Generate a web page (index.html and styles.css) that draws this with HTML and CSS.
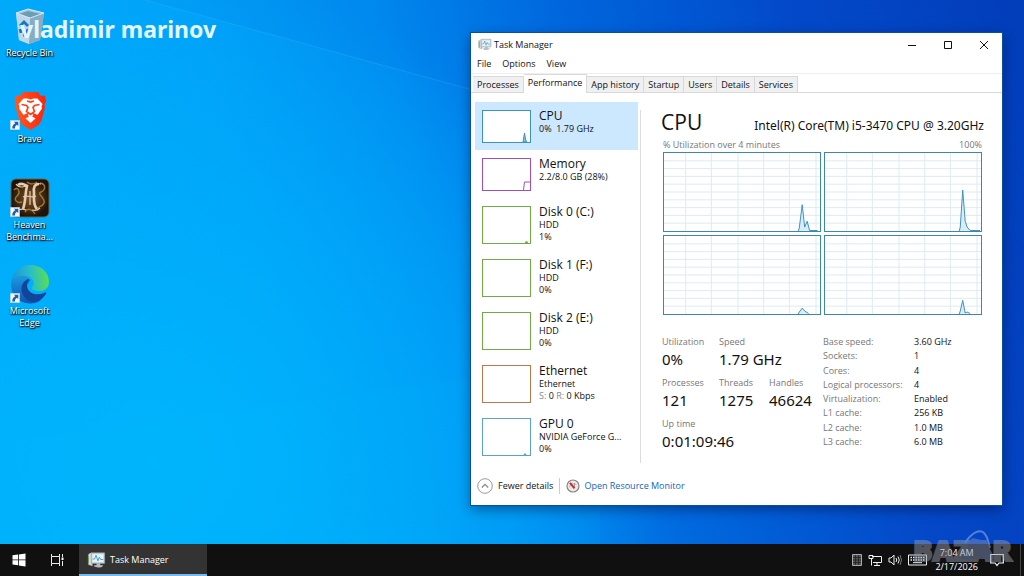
FILE: index.html
```html
<!DOCTYPE html>
<html lang="en">
<head>
<meta charset="utf-8">
<title>Desktop</title>
<link rel="stylesheet" href="styles.css">
</head>
<body>
<svg class="defs" aria-hidden="true">
  <defs>
    <symbol id="shortcut" viewBox="0 0 10 10">
      <path fill="#f4f6f8" stroke="#b9c3cc" stroke-width=".6" d="M.3.3h9.4v9.4H.3z"/>
      <path fill="#1d5fae" d="M4 1.800h4.300v4.300L6.900 4.800C5.400 5.700 4.900 6.700 5 8.400H2.300C2.200 6 3 4.400 5.300 3.200z"/>
    </symbol>
    <symbol id="taskmgr" viewBox="0 0 20 18">
      <path fill="#8f9a9f" d="M1 3h5v12.500L1 14z"/>
      <path fill="#d7dcdf" d="M2 2.500 5 1v14l-3-1.500z"/>
      <path fill="#6a9c4f" d="M1 5h1v8H1z"/>
      <path fill="#d3d9dc" stroke="#99a3a8" stroke-width=".8" d="M4.500 1.500h14v11h-14z"/>
      <path fill="#e6f3fa" d="M6 3h11v8H6z"/>
      <path fill="none" stroke="#3f9fd3" stroke-width="1" d="M6 8h2l1.500-4 2 6 1.500-4 1.500 2.500H17"/>
      <path fill="#b5bdc1" d="M10 12.500h4v2h3c0 3-8 3-9.500 1.200V14.500H10z"/>
    </symbol>
    <symbol id="grid" viewBox="0 0 158 80" preserveAspectRatio="none">
      <path fill="none" stroke="#dcebf2" d="M0 8h158M0 16h158M0 24h158M0 32h158M0 40h158M0 48h158M0 56h158M0 64h158M0 72h158M22 0v80M48 0v80M75 0v80M101 0v80M127 0v80M154 0v80"/>
    </symbol>
  </defs>
</svg>

<div class="screen">
  <main class="desktop">
    <svg class="rays" viewBox="0 0 1024 544" preserveAspectRatio="none" aria-hidden="true">
      <path fill="#004fd0" fill-opacity=".07" d="M145 0 1024 242V0z"/>
      <path fill="#00c4ff" fill-opacity=".08" d="M0 442 600 360V544H0z"/>
      <path fill="none" stroke="#5cc4ff" stroke-opacity=".22" d="M145 0 600 125"/>
    </svg>

    <nav class="shortcuts" aria-label="Desktop icons">
      <a class="shortcut" href="#bin">
        <svg class="shortcut-icon" viewBox="0 0 40 40">
          <path fill="#a9c9dc" d="M6 7 18 3l16 4-4 27-11 4-10-4z"/>
          <path fill="#6d9cb6" d="M9 8 18 5l13 3-11 4z"/>
          <path fill="#86adc3" d="M20 12 34 7l-4 27-11 4z"/>
          <path fill="#bdd8e7" d="M6 7l14 5-1 26-10-4z"/>
          <path fill="none" stroke="#d5e7f1" stroke-width="1" d="M6 7 18 3l16 4-14 5z"/>
          <path fill="none" stroke="#1677c8" stroke-width="2.800" d="M10 20l4-4 4 4M18 23l-2 6h-3M11 27l-1-4"/>
        </svg>
        <span>Recycle Bin</span>
      </a>
      <a class="shortcut" href="#brave">
        <svg class="shortcut-icon" viewBox="0 0 40 40">
          <defs><linearGradient id="brave-fill"><stop stop-color="#ff5a1f"/><stop offset="1" stop-color="#fa2410"/></linearGradient></defs>
          <path fill="url(#brave-fill)" d="M13 0h15l3 4 4-.5 1 6-1.500 3 .5 3-3.500 13-3 4.500L20.500 38l-8-5-3-4.500L5.500 15.500l.5-3-1.500-3 1-6L10 4z"/>
          <path fill="#fff" d="M13.500 6.500h4l3 1 3-1h4l5 5.500-1 2.500.5 2-4.500 6.500-4-2-1 1 .5 2-2.500 1-2.500-1 .5-2-1-1-4 2-4.500-6.500.5-2-1-2.500z"/>
          <path fill="#fff" d="M15.500 26.500 20.500 23.500l5 3-5 4.500z"/>
          <path fill="none" stroke="#fc4018" stroke-width="1.700" d="M11.500 12.500l5 1 1.500 2-1.500 4 4 3 4-3-1.500-4 1.500-2 5-1M17 9l3.500 1 3.500-1"/>
          <use href="#shortcut" x="0" y="28" width="10" height="10"/>
        </svg>
        <span>Brave</span>
      </a>
      <a class="shortcut" href="#heaven">
        <svg class="shortcut-icon" viewBox="0 0 40 40">
          <defs><radialGradient id="heaven-fill"><stop stop-color="#7b5426"/><stop offset=".6" stop-color="#4a2f14"/><stop offset="1" stop-color="#1e130a"/></radialGradient></defs>
          <rect x="1" y="1" width="38" height="38" rx="5" fill="url(#heaven-fill)" stroke="#6c604c"/>
          <path fill="none" stroke="#9e7437" stroke-width="1.500" d="M4 12c4-5 7 3 3 6s0 8 5 6M30 5c6 1 6 7 1 9s5 6 3 11-6 2-6 6M17 4c3 3 8 2 10 0M15 34c3-5 8-2 10 2"/>
          <path fill="none" stroke="#e6cdb2" stroke-width="2.600" d="M8 7c4-3 7 0 9 1-2 7-1 15-4 23M29 6c-4 0-6 3-5 9 0 6-1 12 3 16"/>
          <path fill="none" stroke="#e6cdb2" stroke-width="1.200" d="M6 6c2 3 5 4 10 2M13 19c5-3 8 2 13-1M9 32c3-2 4-1 7 0M22 32c3 1 5 1 8-2M24 8c3-4 5-2 7-2M20 13v14"/>
          <use href="#shortcut" x="0" y="29" width="10" height="10"/>
        </svg>
        <span>Heaven Benchma...</span>
      </a>
      <a class="shortcut" href="#edge">
        <svg class="shortcut-icon" viewBox="0 0 40 40">
          <defs>
            <linearGradient id="edge-top" x1="0" x2="1" y1=".5" y2=".4"><stop stop-color="#1694dc"/><stop offset=".5" stop-color="#28bccb"/><stop offset="1" stop-color="#5be04e"/></linearGradient>
            <linearGradient id="edge-left" x1="0" x2="0" y1="0" y2="1"><stop stop-color="#1b9de2"/><stop offset="1" stop-color="#0f55b4"/></linearGradient>
          </defs>
          <path fill="url(#edge-left)" d="M1 20c1-9 10-12 16-8 4 3 3 6 1 8-4 7 2 17 14 15-4 4-9 4.500-12 4.500C8 39 1 31 1 20z"/>
          <path fill="#12449a" d="M18 15c-7 3-9 12-3 19 5 6 15 5 21-4 1-2-1-2-2-1-7 3-16 1-17-7-.2-3 1-4 3-6z"/>
          <path fill="url(#edge-top)" d="M1 19C2 8 10 1 20 1c12 0 19 8 19 17 0 6-5 10-11 9-4 0-7-2-6-4 3-3 2-8-3-10C11 10 3 12 1 19z"/>
          <use href="#shortcut" x="0" y="29" width="10" height="10"/>
        </svg>
        <span>Microsoft Edge</span>
      </a>
    </nav>

    <p class="owner-mark">vladimir marinov</p>

    <section class="window" aria-label="Task Manager">
      <header class="titlebar">
        <svg class="title-icon"><use href="#taskmgr"/></svg>
        <h1 class="title">Task Manager</h1>
        <button class="caption-button" aria-label="Minimize"><svg viewBox="0 0 10 10"><path d="M1 5.500h8"/></svg></button>
        <button class="caption-button" aria-label="Maximize"><svg viewBox="0 0 10 10"><path d="M1.500 1.500h7v7h-7z"/></svg></button>
        <button class="caption-button" aria-label="Close"><svg viewBox="0 0 10 10"><path d="M1 1l8 8M9 1 1 9"/></svg></button>
      </header>
      <div class="menubar">
        <button>File</button><button>Options</button><button>View</button>
      </div>
      <div class="tabs" role="tablist">
        <button class="tab" role="tab">Processes</button>
        <button class="tab tab-active" role="tab" aria-selected="true">Performance</button>
        <button class="tab" role="tab">App history</button>
        <button class="tab" role="tab">Startup</button>
        <button class="tab" role="tab">Users</button>
        <button class="tab" role="tab">Details</button>
        <button class="tab" role="tab">Services</button>
      </div>

      <div class="content">
        <div class="resources">
          <button class="resource resource-short resource-active">
            <svg class="thumb thumb-cpu" viewBox="0 0 47 31"><path d="M40 31l1.500-9 1 6 1 3z"/></svg>
            <span class="resource-text"><span class="resource-name">CPU</span><span>0%&nbsp; 1.79 GHz</span></span>
          </button>
          <button class="resource resource-short">
            <svg class="thumb thumb-memory" viewBox="0 0 47 31"><path d="M40.500 31l1-8H47"/></svg>
            <span class="resource-text"><span class="resource-name">Memory</span><span>2.2/8.0 GB (28%)</span></span>
          </button>
          <button class="resource">
            <svg class="thumb thumb-disk" viewBox="0 0 47 36"><path d="M42 35.500l1.500-1 1.500 1z"/></svg>
            <span class="resource-text"><span class="resource-name">Disk 0 (C:)</span><span>HDD</span><span>1%</span></span>
          </button>
          <button class="resource">
            <svg class="thumb thumb-disk" viewBox="0 0 47 36"></svg>
            <span class="resource-text"><span class="resource-name">Disk 1 (F:)</span><span>HDD</span><span>0%</span></span>
          </button>
          <button class="resource">
            <svg class="thumb thumb-disk" viewBox="0 0 47 36"></svg>
            <span class="resource-text"><span class="resource-name">Disk 2 (E:)</span><span>HDD</span><span>0%</span></span>
          </button>
          <button class="resource">
            <svg class="thumb thumb-ethernet" viewBox="0 0 47 36"></svg>
            <span class="resource-text"><span class="resource-name">Ethernet</span><span>Ethernet</span><span><i>S:</i> 0 <i>R:</i> 0 Kbps</span></span>
          </button>
          <button class="resource">
            <svg class="thumb thumb-gpu" viewBox="0 0 47 36"><path d="M41 35.500l1-1 1 1z"/></svg>
            <span class="resource-text"><span class="resource-name">GPU 0</span><span>NVIDIA GeForce G...</span><span>0%</span></span>
          </button>
        </div>

        <div class="details">
          <div class="details-head">
            <h2>CPU</h2>
            <p>Intel(R) Core(TM) i5-3470 CPU @ 3.20GHz</p>
          </div>
          <div class="chart-area">
            <div class="chart-caption"><span>% Utilization over 4 minutes</span><span>100%</span></div>
            <div class="charts">
              <svg viewBox="0 0 158 80" preserveAspectRatio="none"><use href="#grid"/><path class="trace" d="M136 80l1-3 3-24 2.500 23L145 70l2.500 9.500h8"/></svg>
              <svg viewBox="0 0 158 80" preserveAspectRatio="none"><use href="#grid"/><path class="trace" d="M136 80l1-4 2.500-38L142 70l2 6 3 3.500h10"/></svg>
              <svg viewBox="0 0 158 80" preserveAspectRatio="none"><use href="#grid"/><path class="trace" d="M136 80l1-2 3-4 2.500 3 4 2.500"/></svg>
              <svg viewBox="0 0 158 80" preserveAspectRatio="none"><use href="#grid"/><path class="trace" d="M136 80l1-3 2.500-11L142 79l2-1 3 1.500"/></svg>
            </div>
          </div>
          <div class="stats">
            <div class="live">
              <div class="stat"><span>Utilization</span><b>0%</b></div>
              <div class="stat stat-wide"><span>Speed</span><b>1.79 GHz</b></div>
              <div class="stat"><span>Processes</span><b>121</b></div>
              <div class="stat"><span>Threads</span><b>1275</b></div>
              <div class="stat"><span>Handles</span><b>46624</b></div>
              <div class="stat stat-full"><span>Up time</span><b>0:01:09:46</b></div>
            </div>
            <dl class="specs">
              <dt>Base speed:</dt><dd>3.60 GHz</dd>
              <dt>Sockets:</dt><dd>1</dd>
              <dt>Cores:</dt><dd>4</dd>
              <dt>Logical processors:</dt><dd>4</dd>
              <dt>Virtualization:</dt><dd>Enabled</dd>
              <dt>L1 cache:</dt><dd>256 KB</dd>
              <dt>L2 cache:</dt><dd>1.0 MB</dd>
              <dt>L3 cache:</dt><dd>6.0 MB</dd>
            </dl>
          </div>
        </div>
      </div>

      <footer class="window-foot">
        <button class="fewer">
          <svg viewBox="0 0 16 16"><circle cx="8" cy="8" r="7.300" fill="#fff" stroke="#9a9a9a"/><path fill="none" stroke="#8a8a8a" stroke-width="1.300" d="M4.800 9.500 8 6.300l3.200 3.200"/></svg>
          Fewer details
        </button>
        <a class="monitor" href="#monitor">
          <svg viewBox="0 0 14 14"><circle cx="7" cy="7" r="6" fill="#e9ebeb" stroke="#8a8583" stroke-width="1.200"/><path fill="none" stroke="#bbb" d="M3.500 8.500a4 4 0 0 1 7-2.500"/><path stroke="#d0281f" stroke-width="2" d="M4 3.800l4.500 5.500"/><path stroke="#888" stroke-width=".8" d="M8.500 4v4"/></svg>
          Open Resource Monitor
        </a>
      </footer>
    </section>
  </main>

  <footer class="taskbar">
    <button class="bar-button" aria-label="Start"><svg viewBox="0 0 14 14" width="14" height="14"><path fill="#fff" d="M.5 2.300 6 1.500v5H.5zM6.800 1.400 13.500.5v6H6.800zM.5 7.300H6v5l-5.500-.8zM6.800 7.300h6.700v6.200l-6.700-1z"/></svg></button>
    <button class="bar-button" aria-label="Task View"><svg viewBox="0 0 14 14" width="14" height="14"><path fill="none" stroke="#eee" d="M1.500 1v2.500h8V1M1.500 13v-2.500h8V13M1.500 3.500v7M9.500 3.500v7M12.500 1v3M12.500 8v5"/><path fill="#fff" d="M11.500 4.500h2v2.500h-2z"/></svg></button>
    <button class="task"><svg class="task-icon"><use href="#taskmgr"/></svg>Task Manager</button>
    <div class="tray">
      <svg width="10" height="12" viewBox="0 0 10 12"><path fill="#555" stroke="#aaa" d="M.5.5h9v11h-9z"/><path stroke="#222" stroke-width=".8" d="M3.500 1v10M6.500 1v10M1 3.500h8M1 6h8M1 8.500h8"/></svg>
      <svg width="14" height="12" viewBox="0 0 14 12"><path fill="none" stroke="#f0f0f0" d="M4 2.500h9.500v6H5M3.500 5v6.500M6 11.500h6M9 8.500v3M1 1.500h4v3H1z"/></svg>
      <svg width="14" height="12" viewBox="0 0 14 12"><path fill="none" stroke="#eee" d="M1 4h2l3-3v10L3 8H1zM8 4q1.500 2 0 4M10 2.500q2.500 3.500 0 7"/><path fill="none" stroke="#777" d="M12 1q3 5 0 10"/></svg>
      <svg width="19" height="12" viewBox="0 0 19 12"><path fill="none" stroke="#eee" d="M.5 1h18v10H.5z"/><path stroke="#eee" stroke-width="1.300" stroke-dasharray="1.500 1" d="M2.500 3.500h14M2.500 6h14"/><path stroke="#eee" d="M5 8.700h9"/></svg>
      <time class="clock" datetime="2026-02-17T07:04">7:04 AM<br>2/17/2026</time>
      <svg width="14" height="14" viewBox="0 0 14 14"><path fill="none" stroke="#f4f4f4" stroke-width="1.200" d="M.7 1.500h12.600v8.500H9L7 12.500 5 10H.7z"/></svg>
    </div>
  </footer>

  <div class="bazar" aria-hidden="true">
    <span>BAZAR</span>
    <svg viewBox="0 0 40 34"><path fill="#7f8fb8" d="M1 30 12 9l14 3 9 18z"/><path fill="none" stroke="#a9baea" stroke-width="2" d="M5 14C12 3 20 0 24 4s4 8 6 15"/></svg>
  </div>
</div>
</body>
</html>
```
FILE: styles.css
```css
* { box-sizing: border-box; }

body {
  margin: 0;
  font: 9px/12px "Open Sans", "Noto Sans", sans-serif;
  color: #111;
}

button {
  margin: 0;
  padding: 0;
  border: 0;
  background: none;
  font: inherit;
  color: inherit;
  text-align: left;
}

a { color: inherit; text-decoration: none; }
h1, h2, p, dl, dd { margin: 0; font-weight: 400; }
.defs { position: absolute; width: 0; height: 0; }

.screen {
  position: relative;
  display: flex;
  flex-direction: column;
  min-height: 100vh;
}

.desktop {
  position: relative;
  flex: 1;
  overflow: hidden;
  background:
    radial-gradient(ellipse 50% 90% at 15% 85%, rgba(0, 182, 252, .9) 0%, rgba(0, 174, 252, .6) 55%, rgba(0, 160, 250, 0) 100%),
    linear-gradient(76deg, #00aefa 0%, #00a2f8 28%, #008cf0 44%, #0068de 60%, #0448c8 80%, #033cb8 100%);
}

.rays { position: absolute; inset: 0; width: 100%; height: 100%; }

.shortcuts {
  position: relative;
  display: grid;
  grid-auto-rows: 86px;
  width: 59px;
  padding-top: 6px;
}

.shortcut {
  display: flex;
  flex-direction: column;
  align-items: center;
  gap: 1px;
  color: #fff;
  text-align: center;
  text-shadow: 0 1px 2px #000, 1px 1px 1px #000;
}

.shortcut-icon { width: 40px; height: 40px; }

.owner-mark {
  position: absolute;
  top: 14px;
  left: 20px;
  font: 700 23px/30px "Noto Sans", sans-serif;
  color: #e4f6ff;
}

.window {
  position: absolute;
  top: 33px;
  left: 46%;
  right: 22px;
  background: #fff;
  box-shadow: 0 0 0 1px #0a4f98, 0 4px 12px rgba(0, 0, 40, .45);
}

.titlebar { display: flex; align-items: center; height: 23px; padding-left: 7px; }
.title-icon { width: 14px; height: 13px; }
.title { flex: 1; margin-left: 2px; font-size: 9px; }
.caption-button { display: flex; justify-content: center; width: 36px; }
.caption-button svg { width: 10px; height: 10px; fill: none; stroke: #111; }

.menubar { display: flex; align-items: flex-start; gap: 11px; height: 17px; padding: 2px 6px 0; }

.tabs {
  display: flex;
  align-items: flex-end;
  height: 20px;
  padding-left: 2px;
  border-top: 1px solid #efefef;
  border-bottom: 1px solid #d9d9d9;
}

.tab {
  height: 16px;
  padding: 0 4px;
  border: 1px solid #d9d9d9;
  border-width: 1px 1px 0 0;
  background: #f0f0f0;
}

.tab-active { height: 19px; margin-bottom: -1px; padding-bottom: 3px; background: #fff; }

.content { display: flex; padding: 9px 18px 0 4px; }

.resources { width: 163px; }

.resource {
  display: flex;
  gap: 8px;
  width: 100%;
  height: 53px;
  padding: 8px 0 0 7px;
}

.resource-short { height: 48px; }
.resource-active { background: #cce8ff; }

.thumb { width: 49px; height: 38px; border: 1px solid; background: #fff; fill: none; stroke: currentColor; }
.resource-short .thumb { height: 33px; }
.thumb-cpu { color: #3c91bd; fill: #8cc3df; }
.thumb-memory { color: #a24fb5; }
.thumb-disk { color: #6fac46; }
.thumb-ethernet { color: #bd7748; }
.thumb-gpu { color: #5ba3cc; }

.resource-text { display: flex; flex-direction: column; margin-top: -1px; white-space: nowrap; }
.resource-name { font-size: 12px; line-height: 14px; }
.resource i { font-style: normal; color: #888; }

.details {
  flex: 1;
  margin: 8px 0 0 2px;
  padding-left: 20px;
  border-left: 1px solid #dcdcdc;
}

.details-head { display: flex; justify-content: space-between; align-items: baseline; height: 28px; line-height: 24px; }
.details-head h2 { font-size: 21px; }
.details-head p { font: 12px/24px "Noto Sans", sans-serif; }
.chart-area { padding: 0 2px; }
.chart-caption { display: flex; justify-content: space-between; height: 14px; line-height: 14px; color: #777; }

.charts { display: grid; grid-template-columns: 1fr 1fr; gap: 3px; }
.charts svg { width: 100%; height: 80px; border: 1px solid #3d86ae; }
.trace { fill: #d9edf7; stroke: #3d8fc0; }

.stats { display: flex; padding: 21px 0 0 1px; }
.live { display: grid; grid-template-columns: 57px 50px 54px; row-gap: 7px; }
.stat { display: flex; flex-direction: column; white-space: nowrap; }
.stat span, .specs dt { color: #777; }
.stat b { font: 15px/22px "Noto Sans", sans-serif; }
.stat-wide { grid-column: span 2; }
.stat-full { grid-column: span 3; }
.specs { display: grid; grid-template-columns: 91px 1fr; align-content: space-between; padding-bottom: 4px; white-space: nowrap; }

.window-foot { display: flex; align-items: center; padding: 15px 6px 11px; }
.fewer, .monitor { display: flex; align-items: center; gap: 5px; }
.fewer { padding-right: 6px; border-right: 1px solid #ccc; }
.fewer svg { width: 16px; height: 16px; }
.monitor { gap: 4px; padding-left: 6px; color: #1464c0; }
.monitor svg { width: 14px; height: 14px; }

.taskbar { display: flex; height: 32px; background: #101010; color: #fff; }
.bar-button { display: grid; place-items: center; width: 38px; }
.task {
  display: flex;
  align-items: center;
  gap: 4px;
  width: 128px;
  margin-left: 3px;
  padding: 2px 0 0 8px;
  border-bottom: 2px solid #76b9ed;
  background: #333;
}
.task-icon { width: 19px; height: 18px; }
.tray { display: flex; align-items: center; gap: 6px; margin-left: auto; margin-right: 3px; padding-right: 16px; border-right: 1px solid #444; }
.clock { margin: 0 6px 0 2px; line-height: 14px; text-align: center; }

.bazar {
  position: absolute;
  right: 12px;
  bottom: 6px;
  color: #9298a8;
  font: 900 29px/40px "Noto Sans", "Open Sans", sans-serif;
  -webkit-text-stroke: 2px #9298a8;
  opacity: .5;
}
.bazar svg { position: absolute; top: -1px; right: 12px; width: 40px; height: 34px; }
```
